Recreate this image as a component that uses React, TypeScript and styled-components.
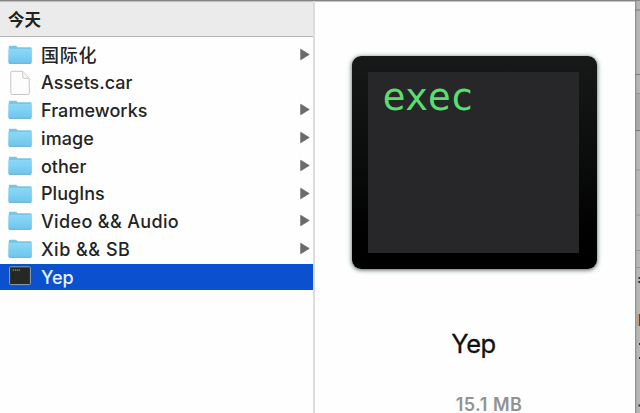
import React from 'react';
import styled, { createGlobalStyle } from 'styled-components';

const GlobalStyle = createGlobalStyle`
  * { box-sizing: border-box; }
  body { margin: 0; overflow: hidden; background: #fefefe; }
`;

const Window = styled.div`
  display: flex;
  width: 640px;
  height: 413px;
  overflow: hidden;
  background: #fefefe;
  color: #222;
  font-family: Inter, 'Noto Sans CJK SC', sans-serif;
  border-top: 1px solid #858585;
  box-shadow: inset 0 1px 0 #c4c4c4;
`;

const Column = styled.section`
  width: 315px;
  flex: none;
  border-right: 2px solid #dcdcde;
`;

const Header = styled.header`
  height: 36px;
  padding: 0 0 1px 8px;
  display: flex;
  align-items: center;
  background: #ebebeb;
  border-top: 1px solid #bdbdbd;
  border-bottom: 1px solid #b5b5b5;
  font-size: 16.5px;
  font-weight: 700;
`;

const List = styled.ul`
  list-style: none;
  margin: 0;
  padding: 4.7px 0 0;
`;

const Row = styled.li<{ $selected?: boolean }>`
  display: flex;
  align-items: center;
  height: 26.25px;
  margin-bottom: 1.5px;
  padding: 0 3px 0 8px;
  background: ${(p) => (p.$selected ? '#0a50cf' : 'transparent')};
  color: ${(p) => (p.$selected ? '#e6f2ff' : '#242424')};
`;

const IconSlot = styled.span`
  display: flex;
  width: 24px;
  height: 26px;
  flex: none;
`;

const Label = styled.span<{ $spacing: number }>`
  flex: 1;
  margin-left: 9px;
  padding-top: 1.5px;
  font-size: 18px;
  line-height: 26px;
  font-weight: 500;
  white-space: nowrap;
  letter-spacing: ${(p) => p.$spacing}px;
`;

const Preview = styled.section`
  width: 320px;
  flex: none;
  display: flex;
  flex-direction: column;
  align-items: center;
  padding-top: 55px;
`;

const ExecFrame = styled.div`
  width: 245px;
  height: 213px;
  flex: none;
  margin-right: 2px;
  padding: 16px 18px 16px 16px;
  border-radius: 9px;
  background: linear-gradient(#171918, #0c0d0d 45%, #020203 80%, #000);
  box-shadow: 0 1px 4px rgba(0, 0, 0, 0.6), 0 0 6px 1px rgba(170, 215, 200, 0.4);
`;

const ExecScreen = styled.div`
  height: 100%;
  padding: 0 0 0 15px;
  background: #272628;
  color: #58df70;
  font: 38.5px/50px 'DejaVu Sans Mono', monospace;
  letter-spacing: -0.6px;
`;

const FileName = styled.div`
  flex: none;
  margin: 58px 3px 0 0;
  font-size: 25.5px;
  line-height: 34px;
  color: #101010;
  letter-spacing: -0.5px;
  -webkit-text-stroke: 0.3px #101010;
`;

const FileSize = styled.div`
  flex: none;
  margin-top: 32px;
  margin-left: 28px;
  font-size: 18px;
  line-height: 24px;
  font-weight: 600;
  color: #929292;
  letter-spacing: 0.5px;
`;

const Backdrop = styled.aside`
  flex: 1;
  height: 413px;
  background: #b5b5b5;
`;

const Folder = () => (
  <svg width="24" height="26" viewBox="0 0 24 26">
    <defs>
      <linearGradient id="folder" x2="0" y2="1">
        <stop stopColor="#8bd8f7" />
        <stop offset="1" stopColor="#6fc5ed" />
      </linearGradient>
    </defs>
    <path d="M.8 5Q.8 3.7 2 3.7H8Q9 3.7 9.4 5.2H22.5Q23.6 5.2 23.6 6.4V20.4Q23.6 21.7 22.3 21.7H1.9Q.5 21.7.5 20.4Z" fill="#79c5e4" />
    <path d="M.5 7.1H23.7V20.2Q23.7 21.2 22.4 21.2H1.8Q.5 21.2.5 20.2Z" fill="url(#folder)" />
    <path d="M1 21.4H23" stroke="#69aecf" strokeWidth=".8" />
  </svg>
);

const Page = () => (
  <svg width="24" height="26" viewBox="0 0 24 26">
    <path d="M4 1.3H14.7L21.3 8.4V23.3Q21.3 24.5 20.1 24.5H4Q2.8 24.5 2.8 23.3V2.5Q2.8 1.3 4 1.3Z" fill="#fdfdfd" stroke="#c6c6c6" />
    <path d="M14.7 1.5V7Q14.7 8.4 16.1 8.4H21" fill="#f4f4f4" stroke="#cacaca" />
  </svg>
);

const Terminal = () => (
  <svg width="24" height="26" viewBox="0 0 24 26">
    <rect x="1.6" y="2.8" width="20.8" height="17.8" rx=".8" fill="#242924" stroke="#91a0ad" strokeWidth="1" />
    <path d="M4.6 6.2h1.5m.5 0h1.5m.5 0h1.5m.5 0h1.5" stroke="#609860" strokeWidth="1.2" />
  </svg>
);

const Arrow = () => (
  <svg width="11" height="14" viewBox="0 0 11 14">
    <path d="M1.7 1.3 10.2 6.5 1.7 11.7Z" fill="#6b6b6b" stroke="#6b6b6b" strokeWidth=".8" strokeLinejoin="round" />
  </svg>
);

const WindowEdge = () => (
  <svg width="5" height="413" viewBox="0 0 5 413">
    <rect width="5" height="413" fill="#b7b7b7" />
    <rect y="92" width="5" height="38" fill="#aaa" />
    <rect width="1.4" height="413" fill="#929292" />
    <path d="M0 9h5M0 73.5h5M0 129.5h5" stroke="#797979" />
    <path d="M0 92.5h5M0 169h5M0 214h5M0 249.5h5M0 266.5h5" stroke="#959595" />
    <path d="M3.5 277h1.5M3.4 281h1.6M4 343h1M4 357h1M3.5 404.5h1.5" stroke="#303030" strokeWidth="2" />
    <path d="M2 313h2v12H2z" fill="#c89c73" />
    <path d="M4 313h1v12H4z" fill="#55483c" />
  </svg>
);

type Kind = 'folder' | 'page' | 'terminal';
const icons: Record<Kind, React.FC> = { folder: Folder, page: Page, terminal: Terminal };

const files: { name: string; kind: Kind; spacing: number }[] = [
  { name: '国际化', kind: 'folder', spacing: 0.8 },
  { name: 'Assets.car', kind: 'page', spacing: 0 },
  { name: 'Frameworks', kind: 'folder', spacing: 0.05 },
  { name: 'image', kind: 'folder', spacing: 0.1 },
  { name: 'other', kind: 'folder', spacing: 0 },
  { name: 'PlugIns', kind: 'folder', spacing: 0.05 },
  { name: 'Video && Audio', kind: 'folder', spacing: 0.35 },
  { name: 'Xib && SB', kind: 'folder', spacing: 0.5 },
  { name: 'Yep', kind: 'terminal', spacing: 0 },
];

export default function App() {
  return (
    <>
      <GlobalStyle />
      <Window>
        <Column>
          <Header>今天</Header>
          <List>
            {files.map(({ name, kind, spacing }) => {
              const Icon = icons[kind];
              return (
                <Row key={name} $selected={kind === 'terminal'}>
                  <IconSlot><Icon /></IconSlot>
                  <Label $spacing={spacing}>{name}</Label>
                  {kind === 'folder' && <Arrow />}
                </Row>
              );
            })}
          </List>
        </Column>
        <Preview>
          <ExecFrame><ExecScreen>exec</ExecScreen></ExecFrame>
          <FileName>Yep</FileName>
          <FileSize>15.1 MB</FileSize>
        </Preview>
        <Backdrop><WindowEdge /></Backdrop>
      </Window>
    </>
  );
}
